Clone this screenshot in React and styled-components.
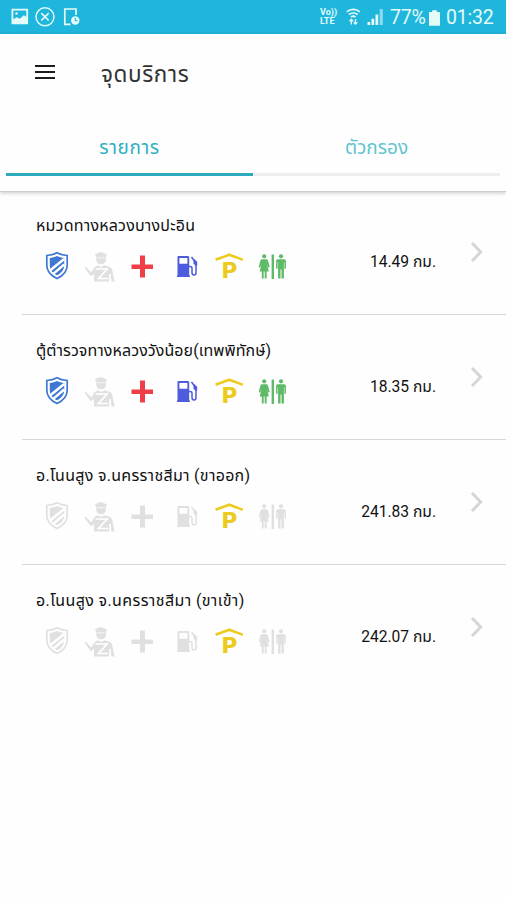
import React from 'react';
import styled, { createGlobalStyle } from 'styled-components';

const GREY = '#e0e0e0';

const places = [
  {
    name: 'หมวดทางหลวงบางปะอิน',
    spacing: 0.2,
    distance: '14.49 กม.',
    services: ['police', 'aid', 'fuel', 'parking', 'toilet'],
  },
  {
    name: 'ตู้ตำรวจทางหลวงวังน้อย(เทพพิทักษ์)',
    spacing: 0.08,
    distance: '18.35 กม.',
    services: ['police', 'aid', 'fuel', 'parking', 'toilet'],
  },
  {
    name: 'อ.โนนสูง จ.นครราชสีมา (ขาออก)',
    spacing: 0.29,
    distance: '241.83 กม.',
    services: ['parking'],
  },
  {
    name: 'อ.โนนสูง จ.นครราชสีมา (ขาเข้า)',
    spacing: 0.38,
    distance: '242.07 กม.',
    services: ['parking'],
  },
];

const Shield = () => (
  <>
    <path
      d="M21 2.800c-3 1.800-6.300 2.500-10.200 2.700v9.500c0 6.600 4.200 10.800 10.200 13.500 6-2.700 10.200-6.900 10.200-13.500V5.500C27.300 5.300 24 4.600 21 2.800z"
      fill="none"
      stroke="currentColor"
      strokeWidth="1.700"
    />
    <path
      d="M21 6c-2.500 1.200-4.500 1.700-7.200 2v7.200c0 4.600 2.900 7.800 7.200 10 4.300-2.200 7.200-5.400 7.200-10V8C25.500 7.700 23.500 7.200 21 6z"
      fill="currentColor"
    />
    <path d="M14.300 20.200L28.200 9M17.500 23.600L28.200 14.500" stroke="#fff" strokeWidth="2.500" />
  </>
);

const Officer = () => (
  <>
    <path
      d="M16 4l5.500-2 6.300 2.200-.8 3v2c0 3-2 5-5 5s-4.800-2-4.800-5V7.200z"
      fill="currentColor"
    />
    <path d="M17.500 7.800h9" stroke="#fff" strokeWidth="0.700" />
    <path
      d="M5.300 17.500l1.700-.5 5.300 5.500 3.200-5.500 3.500-1.800 3 1.700 3.500-1.700 5 1.500c2.500 1.200 3 3 3.200 6l2 8.800h-3l-1.900-7v7H15v-7.500l-3.200 2.200z"
      fill="currentColor"
    />
    <path d="M16.500 19H28.200l-8.700 9.500h9.500M31 24v8" fill="none" stroke="#fff" strokeWidth="1.600" />
  </>
);

const FirstAid = () => (
  <path d="M18 5.500h5v9H31V19h-8v8.500h-5V19H9.500v-4.500H18z" fill="currentColor" />
);

const Fuel = () => (
  <>
    <path
      d="M13.500 6h9.300c.8 0 1.400.6 1.400 1.400v18.100h.8V27H12v-1.500h.5V7c0-.6.400-1 1-1zm.9 2v5.800h8V8z"
      fill="currentColor"
      fillRule="evenodd"
    />
    <path
      d="M24 16.500h1.200c1.200 0 1.800.8 1.800 2v4.200c0 1.300.6 2.200 2 2.200s2-.9 2-2.200V13l-4.500-6"
      fill="none"
      stroke="currentColor"
      strokeWidth="1.500"
    />
    <path d="M28.500 8.500l3.700 3.300v4h-1.700l-2-2.300z" fill="currentColor" />
  </>
);

const Parking = () => (
  <>
    <path
      d="M7.600 9.700C12 8.100 16 6.800 21.300 4.700 26.500 6.800 30.500 8.100 34.800 9.700"
      fill="none"
      stroke="currentColor"
      strokeWidth="2.600"
    />
    <ParkingLetter x="21.400" y="28">
      P
    </ParkingLetter>
  </>
);

const Toilet = () => (
  <>
    <circle cx="13.200" cy="6.300" r="2.100" fill="currentColor" />
    <path
      d="M11.300 9.200h3.800c1.200 0 1.700.7 2 1.700l1.600 6.200-1.500.6-1.500-4.200 2.100 8h-2.200v7h-1.900v-7h-1v7h-1.900v-7H8.700l2.100-8-1.600 4.200-1.500-.6 1.600-6.200c.3-1 .8-1.700 2-1.700z"
      fill="currentColor"
    />
    <path d="M20.600 4.500h2.400v24.500h-2.400z" fill="currentColor" />
    <circle cx="30" cy="6.300" r="2.100" fill="currentColor" />
    <path
      d="M27 9.200h6c1.200 0 1.900.7 1.900 1.900v7.700h-1.500v-6.500h-.5v16.200h-2.400v-9h-1v9h-2.400V12.300h-.5v6.500h-1.500v-7.700c0-1.200.7-1.900 1.900-1.900z"
      fill="currentColor"
    />
  </>
);

const serviceIcons = [
  { key: 'police', color: '#3e78d2', Icon: Shield },
  { key: 'officer', color: '#8a8a8a', Icon: Officer },
  { key: 'aid', color: '#ee3f48', Icon: FirstAid },
  { key: 'fuel', color: '#4d5bdc', Icon: Fuel },
  { key: 'parking', color: '#edcb1e', Icon: Parking },
  { key: 'toilet', color: '#5dba66', Icon: Toilet },
];

const Notifications = () => (
  <svg width="72" height="20" viewBox="0 0 72 20" fill="none" stroke="#e4fbf8">
    <path
      d="M2.500 1.800h14.600c.6 0 1 .4 1 1v13.500c0 .6-.4 1-1 1H2.500c-.6 0-1-.4-1-1V2.800c0-.6.400-1 1-1zM3.300 3.600v8.600l3.500-2 3 1.500 4-3.500 2.500 1.500V3.600z"
      fill="#e4fbf8"
      fillRule="evenodd"
      stroke="none"
    />
    <circle cx="6.500" cy="6.500" r="1.200" fill="#e4fbf8" stroke="none" />
    <circle cx="35" cy="9.800" r="9" strokeWidth="1.500" />
    <path d="M31.300 6.100l7.400 7.400m0-7.400l-7.400 7.400" strokeWidth="1.700" />
    <path d="M60.500 17.300H54.800V2H66v6" strokeWidth="1.700" />
    <circle cx="65.300" cy="13.500" r="4.200" fill="#e4fbf8" stroke="none" />
    <path d="M65.300 10.800v3h2.300" stroke="#1fb6de" strokeWidth="1.100" />
  </svg>
);

const Signals = () => (
  <svg width="45" height="18" viewBox="0 0 45 18" fill="none" stroke="#e4fbf8">
    <path d="M1.800 3.800c3.600-3.200 9.400-3.200 13 0M4 6.500c2.400-2 6.200-2 8.600 0M6.100 9c1.300-1 3.100-1 4.400 0" strokeWidth="1.700" />
    <path d="M6.300 11.500v5M4.500 13.300l1.800-1.800 1.800 1.800M10.500 11v5M8.700 14.300l1.800 1.800 1.800-1.800" strokeWidth="1.300" />
    <path d="M22.500 14h2.700v3h-2.700zM26.500 10.800h2.700V17h-2.700zM30.500 6.500h2.700V17h-2.700z" fill="#e4fbf8" stroke="none" />
    <path d="M34.700 1h3.100v16h-3.100z" fill="#8edbee" stroke="none" />
  </svg>
);

const Place = ({ place }) => (
  <Row>
    <Details>
      <Name $spacing={place.spacing}>{place.name}</Name>
      <Services>
        {serviceIcons.map(({ key, color, Icon }) => (
          <ServiceIcon
            key={key}
            viewBox="0 0 43 36"
            $color={place.services.includes(key) ? color : GREY}
          >
            <Icon />
          </ServiceIcon>
        ))}
      </Services>
    </Details>
    <Distance>{place.distance}</Distance>
    <Chevron viewBox="0 0 14 22">
      <path d="M2 2l8.700 9L2 20" fill="none" stroke="#d6d6d6" strokeWidth="3" />
    </Chevron>
  </Row>
);

export default function App() {
  return (
    <Screen>
      <GlobalStyle />
      <StatusBar>
        <Notifications />
        <StatusGroup>
          <Volte>
            <span>Vo))</span>
            <span>LTE</span>
          </Volte>
          <Signals />
          <StatusText $width={35}>77%</StatusText>
          <Battery viewBox="0 0 12 17">
            <path d="M3.500 0h5v2H12v15H0V2h3.500z" fill="#e4fbf8" />
          </Battery>
          <StatusText $width={47}>01:32</StatusText>
        </StatusGroup>
      </StatusBar>
      <Header>
        <Toolbar>
          <Menu viewBox="0 0 20 14">
            <path d="M0 1h20M0 7h20M0 13h20" stroke="#1c1c1c" strokeWidth="1.900" />
          </Menu>
          <Heading>จุดบริการ</Heading>
        </Toolbar>
        <Tabs>
          <Tab $active $spacing={0.6}>
            รายการ
          </Tab>
          <Tab>ตัวกรอง</Tab>
        </Tabs>
      </Header>
      <List>
        {places.map(place => (
          <Place key={place.name} place={place} />
        ))}
      </List>
    </Screen>
  );
}

const GlobalStyle = createGlobalStyle`
  * {
    box-sizing: border-box;
  }
  body {
    margin: 0;
    background: #fff;
    font-family: Roboto, 'Noto Sans Thai', sans-serif;
  }
`;

const Screen = styled.div`
  width: 506px;
  height: 900px;
  overflow: hidden;
  background: #fefefe;
`;

const StatusBar = styled.div`
  display: flex;
  justify-content: space-between;
  align-items: center;
  height: 34px;
  padding: 0 13px 0 10px;
  background: #1fb6de;
  color: #e4fbf8;
`;

const StatusGroup = styled.div`
  display: flex;
  align-items: center;
`;

const Volte = styled.div`
  display: flex;
  flex-direction: column;
  width: 25px;
  font-size: 9px;
  line-height: 9px;
  font-weight: 700;
`;

const StatusText = styled.span`
  width: ${({ $width }) => $width}px;
  padding-top: 1px;
  font-size: 19.5px;
  line-height: 34px;
  letter-spacing: -0.2px;
  white-space: nowrap;
`;

const Battery = styled.svg`
  width: 11px;
  height: 16px;
  margin: 1px 6px 0 4px;
`;

const Header = styled.header`
  height: 158px;
  border-bottom: 1px solid #cdcdcd;
  box-shadow: 0 1px 4px rgba(0, 0, 0, 0.22);
`;

const Toolbar = styled.div`
  display: flex;
  align-items: center;
  height: 76px;
  padding-left: 35px;
`;

const Menu = styled.svg`
  width: 20px;
  height: 14px;
`;

const Heading = styled.h1`
  margin: 3px 0 0 46px;
  font-size: 22.5px;
  line-height: 30px;
  font-weight: 400;
  letter-spacing: 0.6px;
  color: #333;
`;

const Tabs = styled.div`
  display: grid;
  grid-template-columns: 1fr 1fr;
  height: 66px;
  padding: 0 6px;
`;

const Tab = styled.div`
  display: flex;
  align-items: center;
  justify-content: center;
  padding-top: 14px;
  border-bottom: 3px solid ${({ $active }) => ($active ? '#2ba9bd' : '#eee')};
  font-size: 19px;
  letter-spacing: ${({ $spacing = 0 }) => $spacing}px;
  color: ${({ $active }) => ($active ? '#2eafc2' : '#62c4d0')};
`;

const List = styled.main`
  margin-top: -2px;
  padding-left: 22px;
`;

const Row = styled.div`
  display: flex;
  height: 125px;
  padding: 22px 22px 0 14px;
  border-bottom: 1px solid #d6d6d6;

  &:last-child {
    border-bottom: none;
  }
`;

const Details = styled.div`
  width: 260px;
`;

const Name = styled.div`
  height: 37px;
  font-size: 16px;
  line-height: 27px;
  letter-spacing: ${({ $spacing }) => $spacing}px;
  white-space: nowrap;
  color: #111;
`;

const Services = styled.div`
  display: grid;
  grid-template-columns: repeat(6, 43px);
`;

const ServiceIcon = styled.svg`
  width: 43px;
  height: 36px;
  margin-top: 0.5px;
  color: ${({ $color }) => $color};
`;

const ParkingLetter = styled.text`
  font-family: 'DejaVu Sans', sans-serif;
  font-size: 22px;
  font-weight: 700;
  text-anchor: middle;
  fill: currentColor;
`;

const Distance = styled.div`
  flex: 1;
  margin-top: 37px;
  font-size: 15.6px;
  line-height: 26px;
  text-align: right;
  white-space: nowrap;
  color: #111;
`;

const Chevron = styled.svg`
  width: 14px;
  height: 22px;
  margin: 29px 0 0 34px;
`;
